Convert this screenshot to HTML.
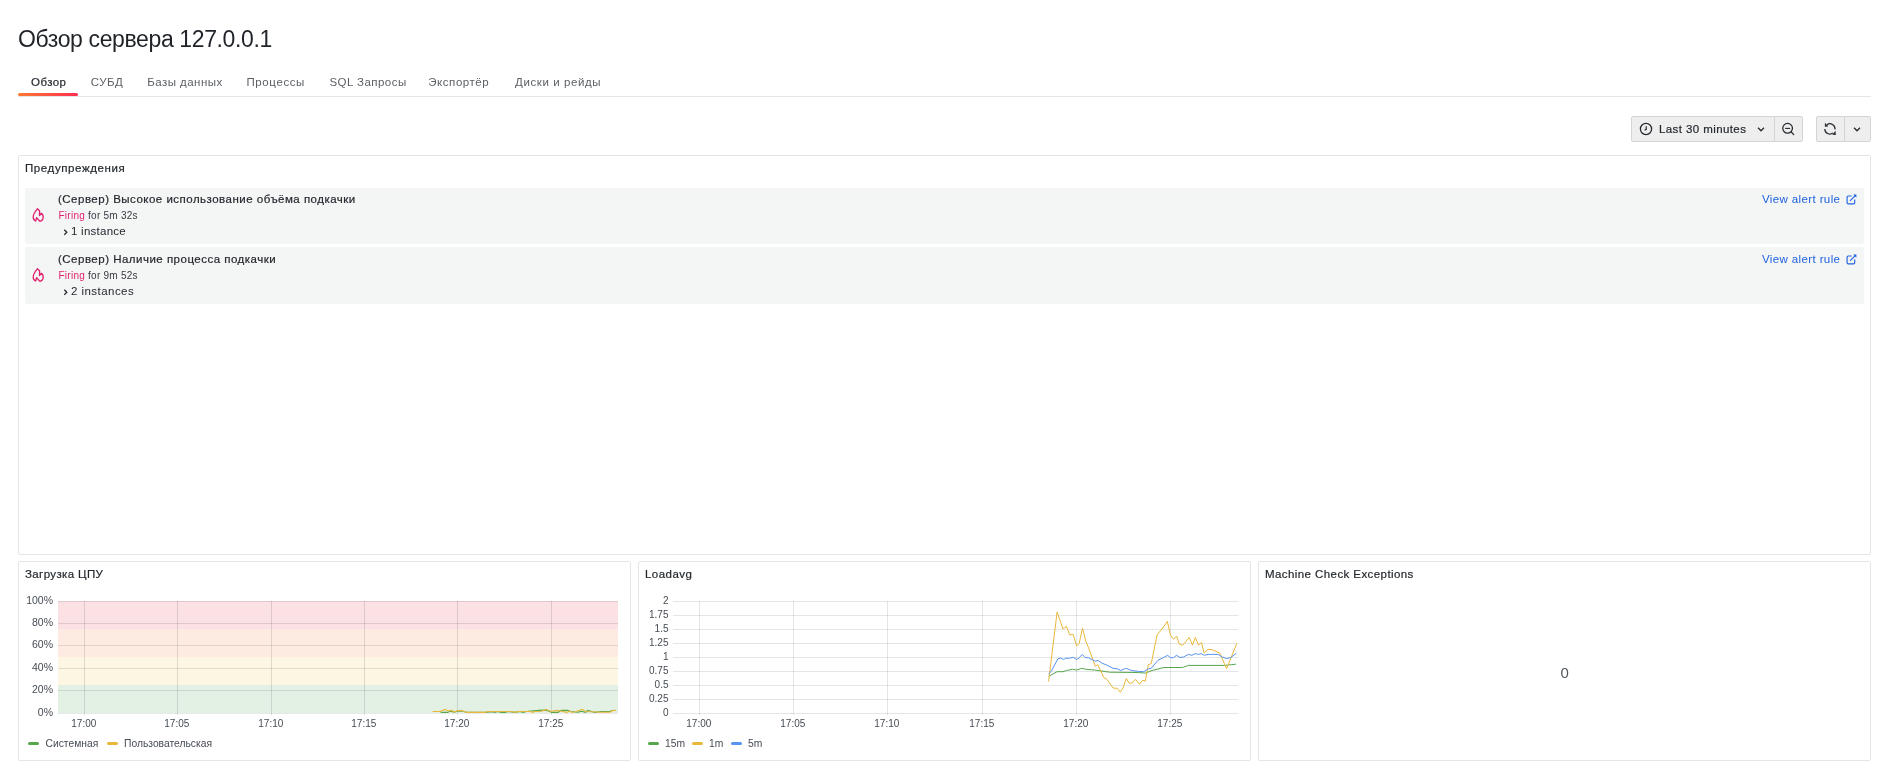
<!DOCTYPE html>
<html><head><meta charset="utf-8">
<style>
html,body{margin:0;padding:0;background:#ffffff;width:1890px;height:767px;overflow:hidden;}
body{font-family:"Liberation Sans",sans-serif;color:#24292e;position:relative;}
#root{position:absolute;left:0;top:0;width:1890px;height:767px;will-change:transform;}
.t{position:absolute;line-height:1;white-space:nowrap;}
.box{position:absolute;box-sizing:border-box;}
.panel{position:absolute;box-sizing:border-box;border:1px solid #e4e5e7;border-radius:2px;background:#fff;}
.tab{position:absolute;top:77px;font-size:11.5px;letter-spacing:0.45px;line-height:1;color:#5b5f64;white-space:nowrap;}
.btn{position:absolute;box-sizing:border-box;top:116px;height:26px;background:#eeeeef;border:1px solid #d3d4d6;}
.row{position:absolute;left:25px;width:1839px;height:56px;background:#f4f5f5;border-radius:2px;}
.ptitle{position:absolute;font-size:11.5px;letter-spacing:0.5px;-webkit-text-stroke:0.2px #24292e;line-height:1;color:#24292e;white-space:nowrap;}
.ax{font-family:"Liberation Sans",sans-serif;font-size:10px;fill:#464c54;}
.leg{position:absolute;font-size:10.3px;line-height:1;color:#464c54;white-space:nowrap;}
.lb{position:absolute;width:11px;height:3px;border-radius:2px;}
</style></head>
<body><div id="root">
<!-- Title -->
<div class="t" style="left:18px;top:27.5px;font-size:23px;letter-spacing:-0.38px;color:#1f2328;">Обзор сервера 127.0.0.1</div>

<!-- Tabs -->
<div class="tab" style="left:31px;color:#24292e;-webkit-text-stroke:0.2px #24292e;">Обзор</div>
<div class="tab" style="left:90.8px;">СУБД</div>
<div class="tab" style="left:147.3px;">Базы данных</div>
<div class="tab" style="left:246.5px;letter-spacing:0.6px;">Процессы</div>
<div class="tab" style="left:329.5px;">SQL Запросы</div>
<div class="tab" style="left:428.3px;letter-spacing:0.55px;">Экспортёр</div>
<div class="tab" style="left:515px;letter-spacing:0.6px;">Диски и рейды</div>
<div class="box" style="left:18px;top:96px;width:1853px;height:1px;background:#e4e5e7;"></div>
<div class="box" style="left:18px;top:93px;width:60px;height:3px;border-radius:2px;background:linear-gradient(90deg,#ff7a33,#ff2d4f);"></div>

<!-- Time picker -->
<div class="btn" style="left:1631px;width:144px;border-radius:2px 0 0 2px;"></div>
<div class="btn" style="left:1774px;width:29px;border-radius:0 2px 2px 0;"></div>
<div class="btn" style="left:1816px;width:29px;border-radius:2px 0 0 2px;"></div>
<div class="btn" style="left:1844px;width:27px;border-radius:0 2px 2px 0;"></div>
<svg style="position:absolute;left:1639px;top:122px" width="14" height="14" viewBox="0 0 14 14"><circle cx="7" cy="7" r="5.6" fill="none" stroke="#24292e" stroke-width="1.3"/><path d="M7.2 4.2 V7.3 L5.6 8.3" fill="none" stroke="#24292e" stroke-width="1.2"/></svg>
<div class="t" style="left:1659px;top:124px;font-size:11.5px;letter-spacing:0.41px;color:#24292e;-webkit-text-stroke:0.2px #24292e;">Last 30 minutes</div>
<svg style="position:absolute;left:1756px;top:126px" width="10" height="7" viewBox="0 0 10 7"><path d="M2 1.8 L5 4.8 L8 1.8" fill="none" stroke="#24292e" stroke-width="1.3"/></svg>
<svg style="position:absolute;left:1780px;top:121px" width="16" height="16" viewBox="0 0 16 16"><circle cx="7.6" cy="7.3" r="4.85" fill="none" stroke="#24292e" stroke-width="1.25"/><path d="M5.1 7.4 H10.2" fill="none" stroke="#24292e" stroke-width="1.1"/><path d="M11.2 10.9 L13.7 13.6" fill="none" stroke="#24292e" stroke-width="1.3" stroke-linecap="round"/></svg>
<svg style="position:absolute;left:1822px;top:121px" width="16" height="16" viewBox="0 0 16 16"><path d="M4.98 3.72 A5.1 5.1 0 0 1 12.98 8.34 M2.8 7.9 A5.1 5.1 0 0 0 10.83 12.08" fill="none" stroke="#24292e" stroke-width="1.25"/><path d="M2.9 1.7 L2.9 5.8 L6.4 5.4 Z M13.5 9.7 L13.8 14.1 L10.3 13.8 Z" fill="#24292e"/></svg>
<svg style="position:absolute;left:1852px;top:126px" width="10" height="7" viewBox="0 0 10 7"><path d="M2 1.8 L5 4.8 L8 1.8" fill="none" stroke="#24292e" stroke-width="1.3"/></svg>

<!-- Alerts panel -->
<div class="panel" style="left:18px;top:155px;width:1853px;height:400px;"></div>
<div class="ptitle" style="left:25px;top:162.5px;letter-spacing:0.6px;">Предупреждения</div>

<div class="row" style="top:188px;"></div>
<div class="row" style="top:247px;height:57px;"></div>
<svg style="position:absolute;left:28px;top:204px" width="20" height="22" viewBox="0 0 20 22"><path d="M9.5 4.7 L11.6 7 L11.5 11.5 L13.5 9.3 C15 10.5 15.5 12.5 15 14.5 C14.5 16 13 17.2 11.8 17.2 L8.6 13.6 L7.8 16.9 C6.3 16.5 5.2 15 5.2 13 C5.2 10.5 6 9 9.5 4.7 Z" fill="none" stroke="#e0226e" stroke-width="1.3" stroke-linejoin="round"/></svg>
<div class="t" style="left:58px;top:194px;font-size:11.5px;letter-spacing:0.49px;color:#24292e;-webkit-text-stroke:0.2px #24292e;">(Сервер) Высокое использование объёма подкачки</div>
<div class="t" style="left:58.5px;top:210.6px;font-size:10px;letter-spacing:0.25px;color:#363b41;"><span style="color:#e0226e">Firing</span> for 5m 32s</div>
<svg style="position:absolute;left:62px;top:224px" width="7" height="13" viewBox="0 0 7 13"><path d="M2.3 5.8 L4.8 8.3 L2.3 10.8" fill="none" stroke="#24292e" stroke-width="1.3"/></svg>
<div class="t" style="left:71px;top:226px;font-size:11.5px;letter-spacing:0.25px;color:#24292e;">1 instance</div>
<div class="t" style="left:1762px;top:193.7px;font-size:11.5px;letter-spacing:0.38px;color:#1f62e0;">View alert rule</div>
<svg style="position:absolute;left:1845px;top:193px" width="13" height="12" viewBox="0 0 13 12"><path d="M6.6 3 H3.3 Q2.1 3 2.1 4.2 V9.7 Q2.1 10.9 3.3 10.9 H8.5 Q9.7 10.9 9.7 9.7 V6.4" fill="none" stroke="#1f62e0" stroke-width="1.15"/><path d="M5 7.9 L10.2 2.7" fill="none" stroke="#1f62e0" stroke-width="1.1"/><path d="M8.2 1.6 H11.4 V4.8 Z" fill="#1f62e0"/></svg>
<svg style="position:absolute;left:28px;top:264px" width="20" height="22" viewBox="0 0 20 22"><path d="M9.5 4.7 L11.6 7 L11.5 11.5 L13.5 9.3 C15 10.5 15.5 12.5 15 14.5 C14.5 16 13 17.2 11.8 17.2 L8.6 13.6 L7.8 16.9 C6.3 16.5 5.2 15 5.2 13 C5.2 10.5 6 9 9.5 4.7 Z" fill="none" stroke="#e0226e" stroke-width="1.3" stroke-linejoin="round"/></svg>
<div class="t" style="left:58px;top:254px;font-size:11.5px;letter-spacing:0.49px;color:#24292e;-webkit-text-stroke:0.2px #24292e;">(Сервер) Наличие процесса подкачки</div>
<div class="t" style="left:58.5px;top:270.6px;font-size:10px;letter-spacing:0.25px;color:#363b41;"><span style="color:#e0226e">Firing</span> for 9m 52s</div>
<svg style="position:absolute;left:62px;top:284px" width="7" height="13" viewBox="0 0 7 13"><path d="M2.3 5.8 L4.8 8.3 L2.3 10.8" fill="none" stroke="#24292e" stroke-width="1.3"/></svg>
<div class="t" style="left:71px;top:286px;font-size:11.5px;letter-spacing:0.45px;color:#24292e;">2 instances</div>
<div class="t" style="left:1762px;top:253.7px;font-size:11.5px;letter-spacing:0.38px;color:#1f62e0;">View alert rule</div>
<svg style="position:absolute;left:1845px;top:253px" width="13" height="12" viewBox="0 0 13 12"><path d="M6.6 3 H3.3 Q2.1 3 2.1 4.2 V9.7 Q2.1 10.9 3.3 10.9 H8.5 Q9.7 10.9 9.7 9.7 V6.4" fill="none" stroke="#1f62e0" stroke-width="1.15"/><path d="M5 7.9 L10.2 2.7" fill="none" stroke="#1f62e0" stroke-width="1.1"/><path d="M8.2 1.6 H11.4 V4.8 Z" fill="#1f62e0"/></svg>

<!-- Bottom panels -->
<div class="panel" style="left:18px;top:561px;width:613px;height:200px;"></div>
<div class="panel" style="left:638px;top:561px;width:613px;height:200px;"></div>
<div class="panel" style="left:1258px;top:561px;width:613px;height:200px;"></div>
<div class="ptitle" style="left:25px;top:569px;letter-spacing:0.37px;">Загрузка ЦПУ</div>
<div class="ptitle" style="left:645px;top:568.5px;letter-spacing:0.45px;">Loadavg</div>
<div class="ptitle" style="left:1265px;top:568.5px;letter-spacing:0.42px;">Machine Check Exceptions</div>
<div class="t" style="left:1560.5px;top:665px;font-size:15px;color:#54595e;">0</div>
<svg style="position:absolute;left:0;top:0" width="1890" height="767" viewBox="0 0 1890 767">
<rect x="58" y="601" width="560" height="28" fill="#fbe0e4"/>
<rect x="58" y="629" width="560" height="28" fill="#fdebe1"/>
<rect x="58" y="657" width="560" height="28" fill="#fdf6e2"/>
<rect x="58" y="685" width="560" height="28" fill="#e3f0e4"/>
<line x1="58" y1="601.5" x2="618" y2="601.5" stroke="rgba(36,41,46,0.12)" stroke-width="1"/>
<line x1="58" y1="623.5" x2="618" y2="623.5" stroke="rgba(36,41,46,0.12)" stroke-width="1"/>
<line x1="58" y1="645.5" x2="618" y2="645.5" stroke="rgba(36,41,46,0.12)" stroke-width="1"/>
<line x1="58" y1="668.5" x2="618" y2="668.5" stroke="rgba(36,41,46,0.12)" stroke-width="1"/>
<line x1="58" y1="690.5" x2="618" y2="690.5" stroke="rgba(36,41,46,0.12)" stroke-width="1"/>
<line x1="58" y1="713.5" x2="618" y2="713.5" stroke="rgba(36,41,46,0.10)" stroke-width="1"/>
<line x1="84.5" y1="601" x2="84.5" y2="715" stroke="rgba(36,41,46,0.14)" stroke-width="1"/>
<line x1="177.5" y1="601" x2="177.5" y2="715" stroke="rgba(36,41,46,0.14)" stroke-width="1"/>
<line x1="271.5" y1="601" x2="271.5" y2="715" stroke="rgba(36,41,46,0.14)" stroke-width="1"/>
<line x1="364.5" y1="601" x2="364.5" y2="715" stroke="rgba(36,41,46,0.14)" stroke-width="1"/>
<line x1="457.5" y1="601" x2="457.5" y2="715" stroke="rgba(36,41,46,0.14)" stroke-width="1"/>
<line x1="551.5" y1="601" x2="551.5" y2="715" stroke="rgba(36,41,46,0.14)" stroke-width="1"/>
<text class="ax" style="font-size:10.5px" x="53" y="604.3" text-anchor="end">100%</text>
<text class="ax" style="font-size:10.5px" x="53" y="626.3" text-anchor="end">80%</text>
<text class="ax" style="font-size:10.5px" x="53" y="648.3" text-anchor="end">60%</text>
<text class="ax" style="font-size:10.5px" x="53" y="671.3" text-anchor="end">40%</text>
<text class="ax" style="font-size:10.5px" x="53" y="693.3" text-anchor="end">20%</text>
<text class="ax" style="font-size:10.5px" x="53" y="715.8" text-anchor="end">0%</text>
<text class="ax" x="83.8" y="726.8" text-anchor="middle">17:00</text>
<text class="ax" x="176.8" y="726.8" text-anchor="middle">17:05</text>
<text class="ax" x="270.8" y="726.8" text-anchor="middle">17:10</text>
<text class="ax" x="363.8" y="726.8" text-anchor="middle">17:15</text>
<text class="ax" x="456.8" y="726.8" text-anchor="middle">17:20</text>
<text class="ax" x="550.8" y="726.8" text-anchor="middle">17:25</text>
<path d="M440.0 711.7 L442.2 712.4 L447.5 712.4 L450.1 711.2 L454.3 712.2 L457.0 711.2 L462.8 711.2 L464.9 711.7 L467.0 712.4 L485.0 712.4 L492.4 711.7 L494.6 712.4 L497.7 711.5 L500.9 712.4 L505.1 712.4 L508.3 711.5 L514.7 712.4 L520.0 711.5 L523.1 712.4 L526.3 711.5 L539.0 710.4 L544.3 710.1 L547.5 710.6 L551.7 712.4 L558.0 712.4 L561.2 710.4 L567.6 710.4 L570.7 711.5 L578.1 712.2 L581.3 711.2 L585.6 712.4 L587.7 710.4 L590.8 711.2 L594.6 712.4 L601.4 711.5 L609.9 711.5 L612.0 710.6" fill="none" stroke="#56a64b" stroke-width="1.1"/>
<path d="M432.6 711.5 L440.0 711.5 L444.8 709.4 L448.5 711.0 L451.7 710.4 L454.9 712.0 L457.5 710.6 L461.7 710.6 L466.5 712.4 L485.0 712.4 L487.7 711.5 L512.5 711.5 L514.7 712.4 L517.8 711.5 L530.5 711.5 L532.6 712.5 L534.8 711.5 L541.1 711.2 L546.4 709.6 L551.2 711.5 L557.0 710.4 L561.2 711.0 L566.5 712.4 L569.7 711.2 L572.3 712.5 L576.0 711.5 L582.4 709.4 L585.6 711.5 L601.4 712.2 L609.9 712.2 L613.1 710.4 L616.2 710.4" fill="none" stroke="#eab839" stroke-width="1.1"/>
<line x1="673" y1="601.5" x2="1238.5" y2="601.5" stroke="rgba(36,41,46,0.12)" stroke-width="1"/>
<line x1="673" y1="615.5" x2="1238.5" y2="615.5" stroke="rgba(36,41,46,0.12)" stroke-width="1"/>
<line x1="673" y1="629.5" x2="1238.5" y2="629.5" stroke="rgba(36,41,46,0.12)" stroke-width="1"/>
<line x1="673" y1="643.5" x2="1238.5" y2="643.5" stroke="rgba(36,41,46,0.12)" stroke-width="1"/>
<line x1="673" y1="657.5" x2="1238.5" y2="657.5" stroke="rgba(36,41,46,0.12)" stroke-width="1"/>
<line x1="673" y1="671.5" x2="1238.5" y2="671.5" stroke="rgba(36,41,46,0.12)" stroke-width="1"/>
<line x1="673" y1="685.5" x2="1238.5" y2="685.5" stroke="rgba(36,41,46,0.12)" stroke-width="1"/>
<line x1="673" y1="699.5" x2="1238.5" y2="699.5" stroke="rgba(36,41,46,0.12)" stroke-width="1"/>
<line x1="673" y1="713.5" x2="1238.5" y2="713.5" stroke="rgba(36,41,46,0.12)" stroke-width="1"/>
<line x1="699.5" y1="601" x2="699.5" y2="715" stroke="rgba(36,41,46,0.12)" stroke-width="1"/>
<line x1="793.5" y1="601" x2="793.5" y2="715" stroke="rgba(36,41,46,0.12)" stroke-width="1"/>
<line x1="887.5" y1="601" x2="887.5" y2="715" stroke="rgba(36,41,46,0.12)" stroke-width="1"/>
<line x1="982.5" y1="601" x2="982.5" y2="715" stroke="rgba(36,41,46,0.12)" stroke-width="1"/>
<line x1="1076.5" y1="601" x2="1076.5" y2="715" stroke="rgba(36,41,46,0.12)" stroke-width="1"/>
<line x1="1170.5" y1="601" x2="1170.5" y2="715" stroke="rgba(36,41,46,0.12)" stroke-width="1"/>
<text class="ax" x="668.5" y="604.3" text-anchor="end">2</text>
<text class="ax" x="668.5" y="618.3" text-anchor="end">1.75</text>
<text class="ax" x="668.5" y="632.3" text-anchor="end">1.5</text>
<text class="ax" x="668.5" y="646.3" text-anchor="end">1.25</text>
<text class="ax" x="668.5" y="660.3" text-anchor="end">1</text>
<text class="ax" x="668.5" y="674.3" text-anchor="end">0.75</text>
<text class="ax" x="668.5" y="688.3" text-anchor="end">0.5</text>
<text class="ax" x="668.5" y="702.3" text-anchor="end">0.25</text>
<text class="ax" x="668.5" y="716.3" text-anchor="end">0</text>
<text class="ax" x="698.8" y="726.8" text-anchor="middle">17:00</text>
<text class="ax" x="792.8" y="726.8" text-anchor="middle">17:05</text>
<text class="ax" x="886.8" y="726.8" text-anchor="middle">17:10</text>
<text class="ax" x="981.8" y="726.8" text-anchor="middle">17:15</text>
<text class="ax" x="1075.8" y="726.8" text-anchor="middle">17:20</text>
<text class="ax" x="1169.8" y="726.8" text-anchor="middle">17:25</text>
<path d="M1048.6 676.4 L1057.1 671.7 L1063.0 671.7 L1066.4 670.5 L1072.4 669.3 L1076.6 670.0 L1081.7 668.3 L1085.9 669.3 L1094.4 670.0 L1109.7 672.2 L1138.5 672.5 L1145.3 673.1 L1152.0 670.5 L1163.9 667.5 L1182.5 667.5 L1188.5 665.4 L1224.9 665.4 L1231.7 664.6 L1235.9 664.2" fill="none" stroke="#56a64b" stroke-width="1"/>
<path d="M1048.6 681.5 L1057.1 612.0 L1063.0 629.0 L1066.4 626.4 L1069.8 634.9 L1073.2 634.4 L1076.6 646.0 L1079.2 643.4 L1082.5 628.1 L1085.9 641.7 L1088.5 647.6 L1095.3 666.3 L1097.8 664.6 L1103.7 677.3 L1107.1 679.5 L1113.0 688.0 L1117.3 688.3 L1120.3 692.2 L1123.2 687.5 L1126.3 678.5 L1129.2 683.2 L1132.2 682.9 L1135.4 679.3 L1139.3 684.1 L1142.7 680.2 L1145.3 681.2 L1148.3 664.6 L1151.2 663.7 L1157.1 634.9 L1163.9 626.4 L1167.3 621.4 L1170.7 635.8 L1173.7 639.2 L1176.6 636.1 L1179.2 643.9 L1182.5 645.4 L1189.3 637.5 L1192.4 645.1 L1195.3 637.5 L1198.6 645.1 L1201.5 642.5 L1204.1 653.1 L1208.0 649.3 L1212.2 649.7 L1219.8 653.1 L1226.6 668.8 L1236.8 643.4" fill="none" stroke="#eab839" stroke-width="1"/>
<path d="M1048.6 673.9 L1051.2 671.4 L1058.0 658.6 L1060.5 658.1 L1063.6 659.5 L1065.6 658.3 L1069.8 658.1 L1073.2 657.3 L1076.6 659.5 L1079.2 657.8 L1082.2 654.4 L1085.1 657.5 L1088.5 657.8 L1095.3 661.2 L1097.8 660.3 L1102.0 663.2 L1106.3 664.9 L1113.0 668.3 L1117.3 668.8 L1120.7 670.5 L1125.8 668.3 L1131.7 670.5 L1138.5 671.4 L1143.6 671.7 L1148.6 668.8 L1151.2 668.3 L1158.0 660.3 L1164.7 656.9 L1167.6 655.3 L1170.7 657.8 L1173.7 657.5 L1176.6 655.3 L1180.0 657.5 L1183.4 657.0 L1188.5 654.4 L1191.9 655.3 L1195.3 653.6 L1198.6 654.4 L1201.2 653.6 L1204.6 655.3 L1208.0 654.4 L1218.1 654.4 L1222.4 657.0 L1226.6 658.6 L1230.8 657.5 L1236.4 653.2" fill="none" stroke="#5794f2" stroke-width="1"/>
</svg>

<div class="lb" style="left:28px;top:742px;background:#56a64b;"></div>
<div class="leg" style="left:45.5px;top:739px;">Системная</div>
<div class="lb" style="left:107px;top:742px;background:#eab839;"></div>
<div class="leg" style="left:124px;top:739px;">Пользовательская</div>
<div class="lb" style="left:648px;top:742px;background:#56a64b;"></div>
<div class="leg" style="left:665px;top:739px;">15m</div>
<div class="lb" style="left:692px;top:742px;background:#eab839;"></div>
<div class="leg" style="left:709px;top:739px;">1m</div>
<div class="lb" style="left:731px;top:742px;background:#5794f2;"></div>
<div class="leg" style="left:748px;top:739px;">5m</div>
</div></body></html>
